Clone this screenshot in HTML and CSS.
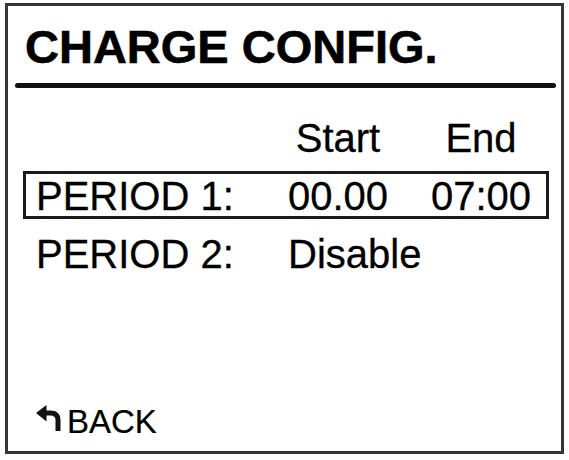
FILE: index.html
```html
<!DOCTYPE html>
<html>
<head>
<meta charset="utf-8">
<link rel="stylesheet" href="styles.css">
</head>
<body>
<div class="screen">
  <h1 class="title">CHARGE CONFIG.</h1>
  <div class="divider"></div>
  <div class="rows">
    <div class="row head">
      <span class="label"></span>
      <span class="cell">Start</span>
      <span class="cell">End</span>
    </div>
    <div class="row selected">
      <span class="label">PERIOD 1:</span>
      <span class="cell">00.00</span>
      <span class="cell">07:00</span>
    </div>
    <div class="row">
      <span class="label">PERIOD 2:</span>
      <span class="cell cell-left">Disable</span>
      <span class="cell"></span>
    </div>
  </div>
  <div class="footer">
    <svg class="back-icon" viewBox="0 0 25 26" width="25" height="26">
      <polygon points="0,8 10.5,0 10.5,16.5" fill="#111"/>
      <path d="M9 8 H14.5 Q22 8 22 15 V26" fill="none" stroke="#111" stroke-width="5"/>
    </svg>
    <span class="back-text">BACK</span>
  </div>
</div>
</body>
</html>
```

FILE: styles.css
```css
html, body {
  margin: 0;
  padding: 0;
  background: #ffffff;
}

body {
  font-family: "Liberation Sans", Arial, sans-serif;
  color: #000;
}

.screen {
  box-sizing: border-box;
  width: 559px;
  height: 451px;
  margin: 3px 0 0 5px;
  border: 3px solid #363636;
  display: flex;
  flex-direction: column;
}

.title {
  margin: 17px 0 0 17px;
  font-size: 47px;
  line-height: 47px;
  font-weight: bold;
  -webkit-text-stroke: 0.6px #000;
}

.divider {
  margin: 13px 5px 0 7px;
  height: 5px;
  border-radius: 2.5px;
  background: #111;
}

.rows {
  margin: 25px 0 0 15px;
  width: 526px;
  display: flex;
  flex-direction: column;
  gap: 10px;
}

.row {
  display: grid;
  grid-template-columns: 224px 110px 110px;
  column-gap: 33px;
  border: 3px solid transparent;
  padding-top: 2px;
  font-size: 40px;
  line-height: 40px;
  white-space: nowrap;
  -webkit-text-stroke: 0.3px #000;
}

.row.selected {
  border-color: #1a1a1a;
}

.label {
  padding-left: 10px;
}

.cell {
  text-align: center;
}

.cell-left {
  text-align: left;
  padding-left: 5px;
}

.footer {
  margin-top: auto;
  padding: 0 0 13px 28px;
  display: flex;
  align-items: flex-start;
  gap: 6px;
}

.back-icon {
  display: block;
  margin-top: -1px;
}

.back-text {
  font-size: 33px;
  line-height: 32px;
  -webkit-text-stroke: 0.2px #000;
}
```
